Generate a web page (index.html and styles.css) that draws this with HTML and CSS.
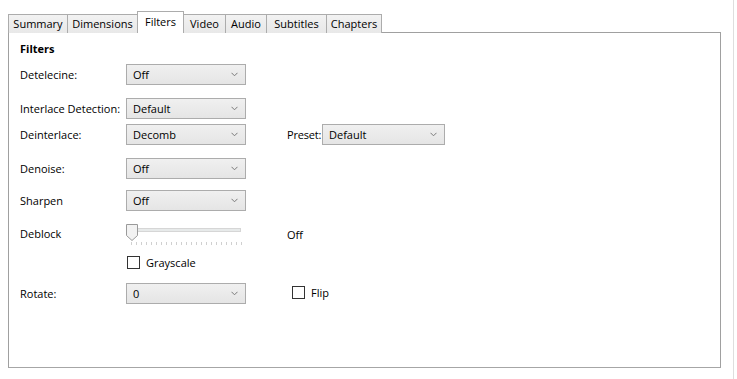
FILE: index.html
```html
<!DOCTYPE html>
<html>
<head>
<meta charset="utf-8">
<link rel="stylesheet" href="styles.css">
</head>
<body>
<div class="window">
  <div class="tabs">
    <div class="tab t-summary">Summary</div>
    <div class="tab t-dim">Dimensions</div>
    <div class="tab tab-active t-filters">Filters</div>
    <div class="tab t-video">Video</div>
    <div class="tab t-audio">Audio</div>
    <div class="tab t-subs">Subtitles</div>
    <div class="tab t-chap">Chapters</div>
  </div>
  <div class="panel">
    <div class="heading">Filters</div>

    <div class="row r-detel">
      <div class="label">Detelecine:</div>
      <div class="combo"><span>Off</span><svg class="chev" width="7" height="5" viewBox="0 0 7 5"><path d="M0.5 0.8 L3.5 3.8 L6.5 0.8" fill="none" stroke="#7a7a7a" stroke-width="1"/></svg></div>
    </div>

    <div class="row r-inter">
      <div class="label">Interlace Detection:</div>
      <div class="combo"><span>Default</span><svg class="chev" width="7" height="5" viewBox="0 0 7 5"><path d="M0.5 0.8 L3.5 3.8 L6.5 0.8" fill="none" stroke="#7a7a7a" stroke-width="1"/></svg></div>
    </div>

    <div class="row r-deint">
      <div class="label">Deinterlace:</div>
      <div class="combo"><span>Decomb</span><svg class="chev" width="7" height="5" viewBox="0 0 7 5"><path d="M0.5 0.8 L3.5 3.8 L6.5 0.8" fill="none" stroke="#7a7a7a" stroke-width="1"/></svg></div>
      <div class="label-preset">Preset:</div>
      <div class="combo combo-preset"><span>Default</span><svg class="chev" width="7" height="5" viewBox="0 0 7 5"><path d="M0.5 0.8 L3.5 3.8 L6.5 0.8" fill="none" stroke="#7a7a7a" stroke-width="1"/></svg></div>
    </div>

    <div class="row r-denoise">
      <div class="label">Denoise:</div>
      <div class="combo"><span>Off</span><svg class="chev" width="7" height="5" viewBox="0 0 7 5"><path d="M0.5 0.8 L3.5 3.8 L6.5 0.8" fill="none" stroke="#7a7a7a" stroke-width="1"/></svg></div>
    </div>

    <div class="row r-sharpen">
      <div class="label">Sharpen</div>
      <div class="combo"><span>Off</span><svg class="chev" width="7" height="5" viewBox="0 0 7 5"><path d="M0.5 0.8 L3.5 3.8 L6.5 0.8" fill="none" stroke="#7a7a7a" stroke-width="1"/></svg></div>
    </div>

    <div class="row r-deblock">
      <div class="label label-deblock">Deblock</div>
      <div class="slider">
        <div class="track"></div>
        <div class="ticks"></div>
        <svg class="thumb" width="12" height="17" viewBox="0 0 12 17"><path d="M0.5 0.5 H11.5 V11.5 L6 16.5 L0.5 11.5 Z" fill="#f2f2f2" stroke="#9a9a9a" stroke-width="1"/></svg>
      </div>
      <div class="value">Off</div>
    </div>

    <div class="row r-gray">
      <div class="label"></div>
      <div class="check"><span class="box"></span><span>Grayscale</span></div>
    </div>

    <div class="row r-rotate">
      <div class="label">Rotate:</div>
      <div class="combo"><span>0</span><svg class="chev" width="7" height="5" viewBox="0 0 7 5"><path d="M0.5 0.8 L3.5 3.8 L6.5 0.8" fill="none" stroke="#7a7a7a" stroke-width="1"/></svg></div>
      <div class="check check-flip"><span class="box"></span><span>Flip</span></div>
    </div>
  </div>
</div>
</body>
</html>
```
FILE: styles.css
```css
html, body {
  margin: 0;
  padding: 0;
  background: #ffffff;
}
body {
  font-family: "Open Sans", "Noto Sans", sans-serif;
  font-size: 11px;
  color: #000;
}
.window {
  width: 733px;
  height: 379px;
  border-right: 1px solid #dedede;
  box-sizing: content-box;
}
.tabs {
  display: flex;
  align-items: flex-end;
  padding-left: 8px;
  padding-top: 12px;
  height: 20px;
  position: relative;
  z-index: 2;
}
.tab {
  height: 19px;
  box-sizing: border-box;
  border: 1px solid #acacac;
  border-bottom: none;
  background: linear-gradient(#f2f2f2, #e8e8e8);
  text-align: center;
  line-height: 18px;
  margin-left: -1px;
  margin-bottom: -1px;
}
.t-summary { width: 60px; margin-left: 0; }
.t-dim { width: 71px; }
.t-filters { width: 47px; }
.t-video { width: 43px; }
.t-audio { width: 42px; }
.t-subs { width: 61px; }
.t-chap { width: 56px; }
.tab-active {
  background: #ffffff;
  height: 22px;
  line-height: 19px;
  position: relative;
  z-index: 3;
  margin-bottom: -1px;
}
.panel {
  margin-left: 8px;
  width: 713px;
  height: 336px;
  box-sizing: border-box;
  border: 1px solid #a0a0a0;
  border-bottom-color: #a6a6a6;
  padding-left: 11px;
  padding-top: 8px;
  position: relative;
  z-index: 1;
}
.heading {
  font-weight: 700;
  height: 15px;
  line-height: 15px;
}
.row {
  display: flex;
  align-items: center;
  height: 21px;
}
.label {
  width: 106px;
  flex: none;
}
.combo {
  width: 120px;
  height: 21px;
  box-sizing: border-box;
  border: 1px solid #acacac;
  background: linear-gradient(#f0f0f0, #e5e5e5);
  display: flex;
  align-items: center;
  justify-content: space-between;
  padding-left: 6px;
  padding-right: 7px;
  flex: none;
}
.combo span { line-height: 19px; }
.label-preset {
  margin-left: 41px;
  width: 35px;
  letter-spacing: -0.2px;
}
.combo-preset {
  width: 123px;
}
.r-detel { margin-top: 8px; }
.r-inter { margin-top: 13px; }
.r-deint { margin-top: 5px; }
.r-denoise { margin-top: 13px; }
.r-sharpen { margin-top: 11px; }
.r-deblock {
  margin-top: 12px;
  height: 24px;
  align-items: flex-start;
}
.label-deblock { line-height: 22px; }
.slider {
  position: relative;
  width: 161px;
  height: 24px;
  flex: none;
}
.track {
  position: absolute;
  left: 8px;
  top: 5px;
  width: 107px;
  height: 4px;
  box-sizing: border-box;
  border: 1px solid #d6d6d6;
  background: #e7eaea;
}
.ticks {
  position: absolute;
  left: 5px;
  top: 19px;
  width: 111px;
  height: 3px;
  background: repeating-linear-gradient(90deg, #d0d0d0 0, #d0d0d0 1px, transparent 1px, transparent 5px);
}
.thumb {
  position: absolute;
  left: 0;
  top: 1px;
}
.value { line-height: 24px; }
.r-gray { margin-top: 7px; height: 16px; }
.check {
  display: flex;
  align-items: center;
  gap: 6px;
  margin-left: 1px;
}
.box {
  width: 13px;
  height: 13px;
  box-sizing: border-box;
  border: 1px solid #333333;
  background: #fff;
}
.r-rotate { margin-top: 13px; }
.check-flip {
  margin-left: 46px;
  margin-top: -3px;
}
```
